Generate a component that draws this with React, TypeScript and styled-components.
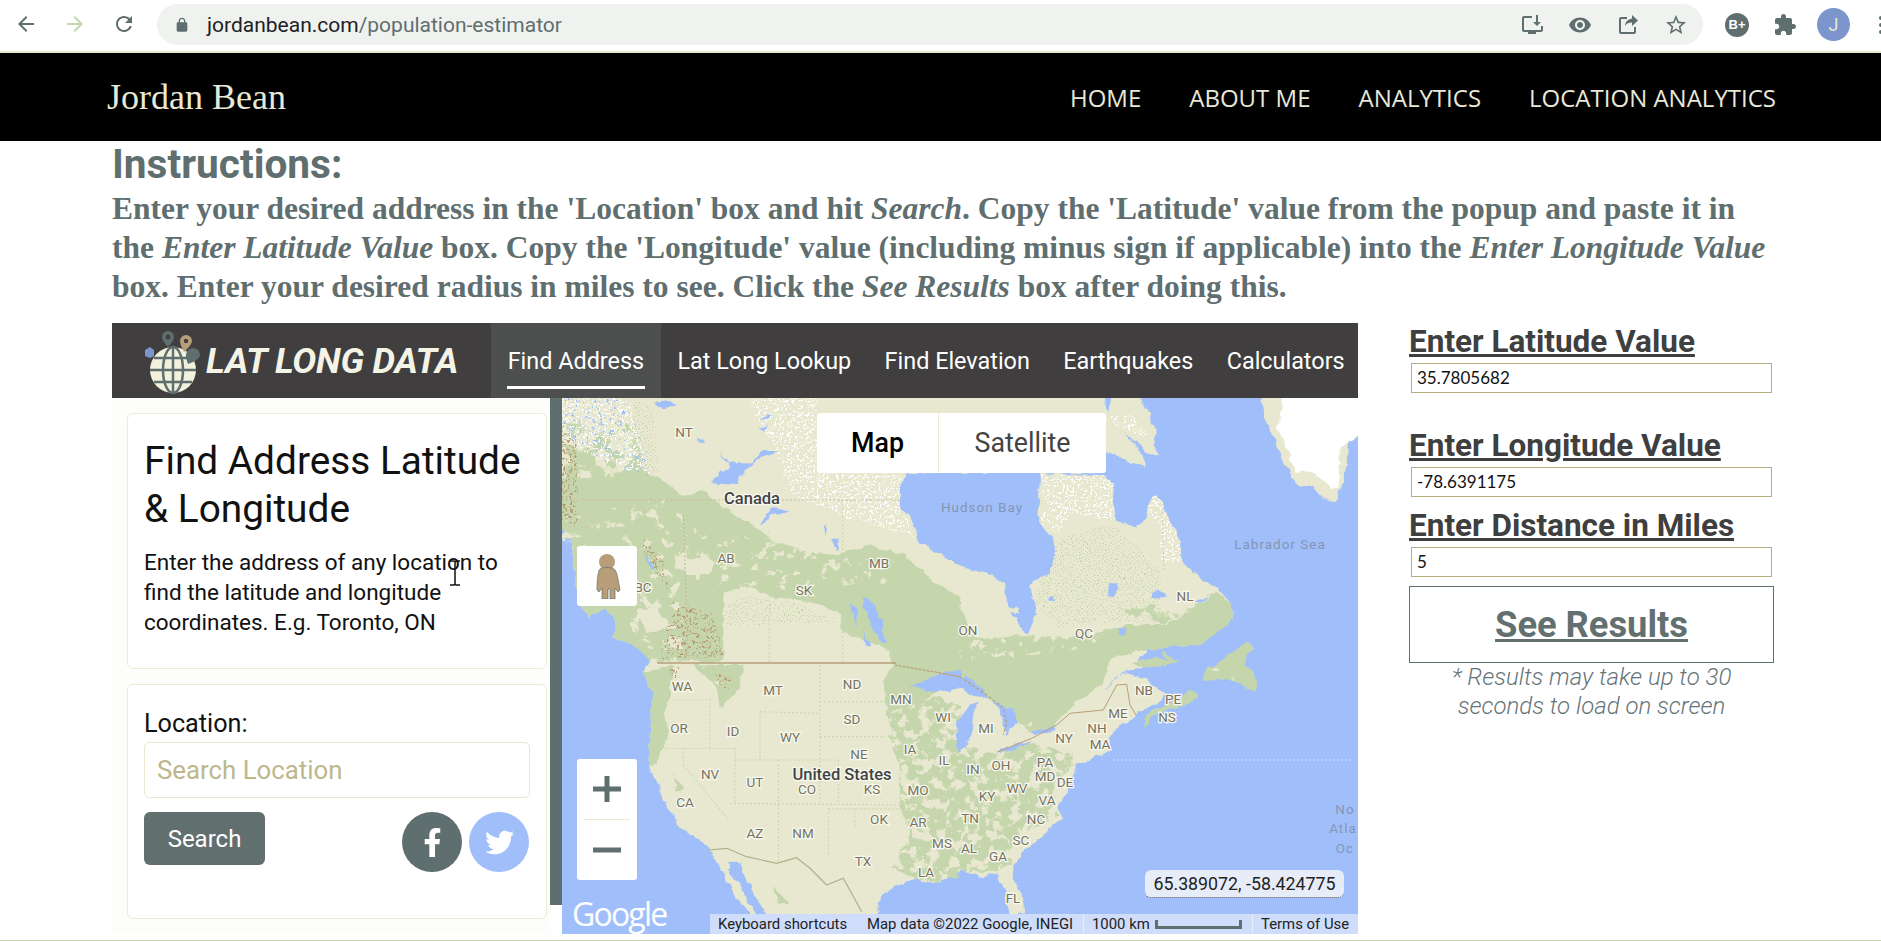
import React from "react";
import styled, { createGlobalStyle } from "styled-components";
import { FaFacebookF, FaTwitter } from "react-icons/fa";

const Global = createGlobalStyle`
  html, body { margin: 0; padding: 0; background: #fff; overflow: hidden; }
  body { font-family: Roboto, "Liberation Sans", sans-serif; width: 1881px; height: 941px; }
  * { box-sizing: border-box; }
`;

const Page = styled.div`
  position: relative;
  width: 1881px;
  height: 941px;
  display: flex;
  flex-direction: column;
  overflow: hidden;
  background: #fff;
  border-bottom: 1px solid #c8d8b0;
`;

/* ---------- browser chrome ---------- */
const Toolbar = styled.div`
  height: 53px;
  flex: none;
  display: flex;
  align-items: flex-start;
  background: #fff;
  border-bottom: 2px solid #e8e8d0;
  padding: 4px 0 0 14px;
`;
const NavIcon = styled.svg<{ $c?: string }>`
  width: 24px;
  height: 24px;
  fill: ${(p) => p.$c || "#5f6e6e"};
  flex: none;
  margin: 8px 25px 0 0;
`;
const UrlBar = styled.div`
  width: 1546px;
  height: 41px;
  margin-left: -4px;
  border-radius: 21px;
  background: #f0f2f0;
  display: flex;
  align-items: center;
  padding: 0 13px 0 17px;
  flex: none;
`;
const LockIcon = styled.svg`
  width: 16px;
  height: 18px;
  fill: #5f6e6e;
  flex: none;
  margin: 0 17px 0 0;
`;
const UrlHost = styled.span`
  font: 400 21px Roboto, sans-serif;
  color: #202124;
`;
const UrlPath = styled.span`
  font: 400 21px Roboto, sans-serif;
  color: #5f6e6e;
`;
const UrlActions = styled.div`
  margin-left: auto;
  display: flex;
  align-items: center;
  gap: 24px;
  padding-right: 2px;
`;
const ActionIcon = styled.svg`
  width: 24px;
  height: 24px;
  fill: #5f6e6e;
  flex: none;
  display: block;
`;
const ChromeRight = styled.div`
  display: flex;
  align-items: center;
  height: 41px;
  margin-left: 22px;
  flex: none;
`;
const Badge = styled.div`
  width: 24px;
  height: 24px;
  border-radius: 50%;
  background: #5f6e6e;
  color: #fff;
  font: 700 13px "Liberation Sans", sans-serif;
  display: flex;
  align-items: center;
  justify-content: center;
  margin-right: 24px;
`;
const Avatar = styled.div`
  width: 33px;
  height: 33px;
  border-radius: 50%;
  background: #7d95cd;
  color: #e8e8d0;
  font: 400 18px Roboto, sans-serif;
  display: flex;
  align-items: center;
  justify-content: center;
  margin-left: 20px;
`;
const Dots = styled.div`
  display: flex;
  flex-direction: column;
  gap: 3px;
  margin-left: 29px;
`;
const Dot = styled.span`
  width: 4px;
  height: 4px;
  border-radius: 50%;
  background: #5f6e6e;
`;

/* ---------- site header ---------- */
const SiteNav = styled.header`
  height: 88px;
  flex: none;
  background: #000;
  display: flex;
  align-items: center;
  justify-content: space-between;
  padding: 0 105px 0 107px;
`;
const Brand = styled.div`
  font: 400 36px "Liberation Serif", serif;
  color: #e8e8d8;
`;
const SiteLinks = styled.nav`
  display: flex;
  gap: 48px;
`;
const SiteLink = styled.a`
  font: 400 24px "Open Sans", sans-serif;
  color: #e8e8d8;
`;

/* ---------- instructions ---------- */
const Content = styled.main`
  padding: 0 0 0 112px;
  flex: 1;
  min-height: 0;
  display: flex;
  flex-direction: column;
`;
const Title = styled.h2`
  margin: 2px 0 0;
  font: 700 40.6px/42px Roboto, sans-serif;
  color: #5f6e6e;
`;
const Instructions = styled.p`
  margin: 4px 0 0;
  width: 1662px;
  font: 700 31.5px/39px "Liberation Serif", serif;
  color: #5f6e6e;
  em { font-style: italic; }
`;
const Row = styled.div`
  display: flex;
  margin-top: 17px;
  align-items: flex-start;
`;

/* ---------- embedded page ---------- */
const Embed = styled.section`
  width: 1246px;
  height: 611px;
  display: flex;
  flex-direction: column;
  flex: none;
`;
const EmbedHeader = styled.div`
  height: 75px;
  background: #403e3f;
  display: flex;
  flex: none;
`;
const Logo = styled.div`
  width: 379px;
  display: flex;
  align-items: center;
  padding-left: 28px;
  gap: 0;
  flex: none;
`;
const LogoGlobe = styled.svg`
  width: 66px;
  height: 66px;
  flex: none;
`;
const LogoText = styled.span`
  font: italic 700 35.8px Roboto, sans-serif;
  color: #f4f4e6;
  white-space: nowrap;
  letter-spacing: -0.2px;
`;
const Tabs = styled.div`
  display: flex;
  flex: 1;
  min-width: 0;
`;
const Tab = styled.a<{ $active?: boolean }>`
  font: 400 23.4px Roboto, sans-serif;
  color: #fff;
  padding: 0 16.7px;
  display: flex;
  flex: none;
  align-items: center;
  height: 75px;
  position: relative;
  white-space: nowrap;
  background: ${(p) => (p.$active ? "#4d4e4e" : "transparent")};
  ${(p) =>
    p.$active &&
    `&::after { content: ""; position: absolute; left: 16px; right: 16px; bottom: 9px; height: 3px; background: #fff; }`}
`;
const EmbedBody = styled.div`
  display: flex;
  flex: 1;
  min-height: 0;
`;
const Sidebar = styled.aside`
  width: 438px;
  flex: none;
  background: #fdfdfa;
  padding: 15px 3px 0 15px;
  display: flex;
  flex-direction: column;
  gap: 15px;
`;
const Card = styled.div<{ $h: number }>`
  height: ${(p) => p.$h}px;
  background: #fff;
  border: 1px solid #ecebd4;
  border-radius: 6px;
  padding: 0 16px;
`;
const CardTitle = styled.h1`
  margin: 23px 0 0;
  font: 400 38.8px/48px Roboto, sans-serif;
  color: #111;
`;
const CardText = styled.p`
  margin: 14px 0 0;
  font: 400 22.5px/30px Roboto, sans-serif;
  color: #111;
  width: 370px;
`;
const FieldLabel = styled.div`
  margin-top: 25px;
  font: 400 25.2px/28px Roboto, sans-serif;
  color: #111;
`;
const LocationInput = styled.div`
  height: 56px;
  margin-top: 4px;
  border: 1px solid #e8e8d0;
  border-radius: 5px;
  padding: 0 12px;
  display: flex;
  align-items: center;
  font: 400 25.8px Roboto, sans-serif;
  color: #bdb78e;
`;
const CardFooter = styled.div`
  margin-top: 14px;
  display: flex;
  align-items: flex-start;
`;
const SearchButton = styled.button`
  width: 121px;
  height: 53px;
  border: 0;
  border-radius: 6px;
  background: #626f6f;
  color: #fff;
  font: 400 24px Roboto, sans-serif;
`;
const SocialWrap = styled.div`
  margin-left: auto;
  margin-right: 1px;
  display: flex;
  gap: 7px;
`;
const Social = styled.a<{ $bg: string }>`
  width: 60px;
  height: 60px;
  border-radius: 50%;
  background: ${(p) => p.$bg};
  color: #fff;
  display: flex;
  align-items: center;
  justify-content: center;
  font-size: 29px;
`;
const Scrollbar = styled.div`
  width: 12px;
  height: 507px;
  background: #5f6e6e;
  flex: none;
`;

/* ---------- map ---------- */
const MapArea = styled.div`
  width: 796px;
  height: 536px;
  position: relative;
  overflow: hidden;
  background: #a0bffa;
  flex: none;
`;
const MapSvg = styled.svg`
  display: block;
  width: 796px;
  height: 536px;
`;
const MapTypeBox = styled.div`
  position: absolute;
  left: 255px;
  top: 15px;
  width: 289px;
  height: 60px;
  background: #fff;
  border-radius: 3px;
  display: flex;
`;
const MapType = styled.div<{ $on?: boolean }>`
  display: flex;
  align-items: center;
  justify-content: center;
  font: ${(p) => (p.$on ? 500 : 400)} 26.8px Roboto, sans-serif;
  color: ${(p) => (p.$on ? "#000" : "#444")};
  width: ${(p) => (p.$on ? 122 : 167)}px;
  border-right: ${(p) => (p.$on ? "1px solid #ecebd4" : "0")};
`;
const Pegman = styled.div`
  position: absolute;
  left: 15px;
  top: 148px;
  width: 60px;
  height: 60px;
  background: #fff;
  border-radius: 3px;
  display: flex;
  align-items: center;
  justify-content: center;
`;
const PegIcon = styled.svg`
  width: 28px;
  height: 46px;
`;
const Zoom = styled.div`
  position: absolute;
  left: 15px;
  top: 361px;
  width: 60px;
  height: 121px;
  background: #fff;
  border-radius: 3px;
  display: flex;
  flex-direction: column;
`;
const ZoomBtn = styled.div`
  flex: 1;
  display: flex;
  align-items: center;
  justify-content: center;
  &:first-child { border-bottom: 1px solid #ecebd4; margin: 0 7px; }
`;
const ZoomGlyph = styled.svg`
  width: 28px;
  height: 28px;
  fill: #5f6e6e;
`;
const GoogleMark = styled.div`
  position: absolute;
  left: 10px;
  bottom: 2px;
  font: 400 32px/36px "Open Sans", sans-serif;
  letter-spacing: -1.8px;
  color: #fff;
`;
const Coordinates = styled.div`
  position: absolute;
  left: 583px;
  top: 472px;
  width: 199px;
  height: 28px;
  border-radius: 6px;
  background: #e6ecf8;
  border-bottom: 1px dotted #444;
  color: #222;
  font: 400 17.8px/27px Roboto, sans-serif;
  text-align: center;
  white-space: nowrap;
`;
const Attribution = styled.div`
  position: absolute;
  left: 148px;
  right: 0;
  bottom: 0;
  height: 20px;
  background: #cfddfb;
  display: flex;
  align-items: center;
  font: 400 14.9px/20px Roboto, sans-serif;
  color: #222;
  white-space: nowrap;
`;
const AttrItem = styled.span<{ $w: number; $div?: boolean }>`
  width: ${(p) => p.$w}px;
  padding-left: 8px;
  height: 20px;
  display: flex;
  align-items: center;
  gap: 5px;
  flex: none;
  border-left: ${(p) => (p.$div ? "1px solid #e8edf8" : "0")};
`;
const ScaleBar = styled.i`
  display: block;
  width: 87px;
  height: 9px;
  border: 3px solid #5f6e6e;
  border-top: 0;
`;
const Cursor = styled.svg`
  position: absolute;
  left: 448px;
  top: 560px;
  width: 14px;
  height: 26px;
`;

/* ---------- side form ---------- */
const Form = styled.aside`
  width: 365px;
  margin-left: 51px;
  margin-top: 1px;
  display: flex;
  flex-direction: column;
`;
const FormLabel = styled.label<{ $mt: number }>`
  margin-top: ${(p) => p.$mt}px;
  font: 700 31.5px/36px Roboto, sans-serif;
  color: #3f3f40;
  text-decoration: underline;
  white-space: nowrap;
`;
const FormInput = styled.div`
  width: 361px;
  height: 30px;
  margin: 3px 0 0 2px;
  border: 1px solid #b5ad7d;
  padding-left: 5px;
  font: 400 17px/28px Lato, sans-serif;
  color: #111;
`;
const ResultsButton = styled.div`
  margin-top: 9px;
  height: 77px;
  width: 365px;
  border: 1px solid #5f6e6e;
  display: flex;
  align-items: center;
  justify-content: center;
  font: 700 36.3px Roboto, sans-serif;
  color: #627070;
  text-decoration: underline;
`;
const Note = styled.p`
  margin: 0;
  padding: 0 30px 0;
  font: italic 300 24px/29px Roboto, sans-serif;
  color: #66757a;
  text-align: center;
`;

/* ---------- map drawing ---------- */
const W = "#a0bffa";
const L = "#e8e8d0";
const G = "#c5d6ad";
const B = "#b89e78";

const z = (ox: number, oy: number, pts: number[]) => {
  const out: string[] = [];
  for (let i = 0; i < pts.length; i += 2) out.push(`${(ox + pts[i] / 3).toFixed(1)},${(oy + pts[i + 1] / 3).toFixed(1)}`);
  return out.join(" ");
};
const z8 = (p: number[]) => z(560, 395, p);
const z9 = (p: number[]) => z(960, 395, p);
const z10 = (p: number[]) => z(560, 665, p);
const z11 = (p: number[]) => z(960, 665, p);

const landMain =
  "540,380 " +
  z9([0, -50, 520, -50, 520, 0]) + " " +
  z9([240, 200, 260, 235, 425, 240, 465, 265, 460, 340, 470, 375, 520, 400, 560, 370, 565, 340, 588, 295, 600, 320, 630, 380, 655, 420, 670, 460, 660, 490, 700, 535, 775, 580, 815, 625, 818, 670, 790, 720, 760, 745, 700, 760, 560, 770, 530, 800]) + " " +
  z11([600, 0, 490, 20, 520, 30, 560, 40, 590, 70, 610, 85, 600, 110, 530, 145, 525, 160, 470, 190, 445, 225, 450, 258, 385, 285, 350, 295, 345, 320, 320, 380, 295, 420, 303, 460, 250, 510, 190, 560, 160, 600, 160, 640, 190, 700, 192, 745, 150, 750, 130, 670, 110, 625, 60, 635, 0, 615]) + " " +
  z10([1160, 640, 1130, 655, 1070, 640, 1000, 665, 960, 700, 950, 750, 940, 830, 700, 830]) + " " +
  z10([600, 820, 570, 745, 530, 700, 500, 640, 450, 560, 430, 530, 360, 490, 310, 400, 265, 300, 270, 200, 275, 90, 270, 60, 250, 20]) + " " +
  z8([270, 800, 240, 760, 200, 745, 160, 730, 170, 680, 140, 640, 85, 670, 50, 600, 40, 480, 30, 440, 0, 380, -60, 380]);

const stateLines = [
  [780, 0, 780, 420], [600, 140, 780, 145], [780, 110, 975, 110], [780, 215, 975, 215], [600, 140, 600, 285],
  [450, 100, 450, 250], [290, 250, 530, 250], [340, 105, 450, 105], [525, 250, 525, 420], [655, 285, 835, 285],
  [835, 285, 835, 420], [525, 285, 655, 285], [510, 415, 1020, 420], [655, 285, 655, 590], [805, 430, 805, 575],
  [885, 430, 885, 490], [975, 110, 1020, 300], [1020, 300, 1020, 430], [805, 432, 1020, 432],
  [370, 250, 370, 300], [370, 300, 510, 470],
];
const canadaLines8 = [[370, 360, 385, 800], [628, 410, 628, 800], [848, 315, 848, 800], [5, 315, 1020, 315], [1000, 480, 1000, 780]];
const labels: [string, number, number][] = [
  ["NT", 684, 432], ["AB", 726, 558], ["MB", 879, 563], ["SK", 804, 590], ["BC", 643, 587],
  ["ON", 968, 630], ["QC", 1084, 633], ["NL", 1185, 596],
  ["WA", 682, 686], ["MT", 773, 690], ["ND", 852, 684], ["MN", 901, 699], ["WI", 943, 717], ["OR", 679, 728],
  ["ID", 733, 731], ["WY", 790, 737], ["SD", 852, 719], ["IA", 910, 749], ["NE", 859, 754], ["IL", 944, 760],
  ["NV", 710, 774], ["UT", 755, 782], ["CO", 807, 789], ["KS", 872, 789], ["MO", 918, 790], ["CA", 685, 802],
  ["AZ", 755, 833], ["NM", 803, 833], ["OK", 879, 819], ["AR", 918, 822], ["MS", 942, 843], ["TX", 863, 861], ["LA", 926, 872],
  ["NB", 1144, 690], ["PE", 1173, 699], ["ME", 1118, 713], ["NS", 1167, 717], ["MI", 986, 728], ["NH", 1097, 728],
  ["NY", 1064, 738], ["MA", 1100, 744], ["IN", 973, 769], ["OH", 1001, 765], ["PA", 1045, 762], ["MD", 1045, 776],
  ["DE", 1065, 782], ["KY", 987, 796], ["WV", 1017, 788], ["VA", 1047, 800], ["TN", 970, 818], ["NC", 1036, 819],
  ["SC", 1021, 840], ["AL", 969, 848], ["GA", 998, 856], ["FL", 1013, 898],
];
const seaLabels: [string, number, number][] = [
  ["Hudson Bay", 982, 507], ["Labrador Sea", 1280, 544], ["No", 1345, 809], ["Atla", 1343, 828], ["Oc", 1345, 848],
];

const MapLabel = styled.text`
  font: 400 13.5px Roboto, sans-serif;
  fill: #75735e;
  stroke: #f8f8ee;
  stroke-width: 2.5px;
  paint-order: stroke;
  text-anchor: middle;
  dominant-baseline: central;
`;
const CountryLabel = styled(MapLabel)`
  font: 500 16.5px Roboto, sans-serif;
  fill: #3f4446;
`;
const SeaLabel = styled.text`
  font: 400 13.5px Roboto, sans-serif;
  fill: #8495b4;
  letter-spacing: 1px;
  text-anchor: middle;
  dominant-baseline: central;
`;

const Mottle = ({ id, color, freq, t, seed }: { id: string; color: [number, number, number]; freq: number; t: number; seed: number }) => (
  <filter id={id} filterUnits="userSpaceOnUse" x="540" y="380" width="840" height="570" colorInterpolationFilters="sRGB">
    <feTurbulence type="fractalNoise" baseFrequency={freq} numOctaves={4} seed={seed} result="n" />
    <feColorMatrix
      in="n"
      result="c"
      values={`0 0 0 0 ${color[0] / 255} 0 0 0 0 ${color[1] / 255} 0 0 0 0 ${color[2] / 255} 14 0 0 0 ${-14 * t}`}
    />
    <feComposite in="c" in2="SourceAlpha" operator="in" />
  </filter>
);

const TheMap = () => (
  <MapSvg viewBox="562 398 796 536">
    <defs>
      <pattern id="greenDots" width="4" height="4" patternUnits="userSpaceOnUse">
        <rect x="1" y="1" width="1" height="1" fill={G} />
        <rect x="3" y="3" width="1" height="1" fill={G} />
      </pattern>
      <filter id="rough" filterUnits="userSpaceOnUse" x="540" y="380" width="840" height="570" colorInterpolationFilters="sRGB">
        <feTurbulence type="fractalNoise" baseFrequency=".09" numOctaves={3} seed={7} result="n" />
        <feDisplacementMap in="SourceGraphic" in2="n" scale="7" xChannelSelector="R" yChannelSelector="G" />
      </filter>
      <Mottle id="mGreen" color={[197, 214, 173]} freq={0.06} t={0.47} seed={3} />
      <Mottle id="mGreenDense" color={[197, 214, 173]} freq={0.1} t={0.41} seed={9} />
      <Mottle id="mBeige" color={[232, 232, 208]} freq={0.1} t={0.61} seed={5} />
      <Mottle id="mBrown" color={[184, 158, 120]} freq={0.4} t={0.58} seed={11} />
      <Mottle id="mWhite" color={[255, 255, 255]} freq={0.5} t={0.54} seed={2} />
      <Mottle id="mBlue" color={[160, 191, 250]} freq={0.3} t={0.64} seed={13} />
    </defs>
    <rect x="540" y="380" width="840" height="570" fill={W} />
    <g filter="url(#rough)">
      {/* continent */}
      <polygon points={landMain} fill={L} />
      {/* boreal green */}
      <polygon
        points={
          z8([-30, 250, 60, 250, 150, 250, 230, 190, 250, 230, 280, 240, 360, 300, 440, 290, 490, 340, 580, 390, 640, 440, 740, 470, 830, 480, 920, 450, 1040, 480, 1120, 560, 1200, 600]) +
          " " +
          z9([0, 640, 50, 730, 190, 720, 300, 730, 430, 710, 500, 690, 620, 690, 700, 640, 770, 590, 815, 625, 818, 670, 790, 720, 730, 750, 560, 765, 450, 790]) +
          " " +
          z11([420, 60, 380, 95, 330, 135, 280, 180, 215, 205, 160, 160, 130, 130, 60, 80, 0, 40]) +
          " " +
          z10([1130, 80, 1040, 130, 980, 140, 970, 40, 1000, 0]) +
          " " +
          z8([1000, 800, 980, 760, 850, 710, 840, 660, 770, 620, 650, 610, 560, 570, 490, 600, 490, 800, 270, 800, 240, 760, 200, 745, 160, 730, 170, 680, 140, 640, 85, 670, 50, 600, 40, 480, 30, 440, 0, 380, -30, 380])
        }
        fill={G}
      />
      <polygon points={z8([220, 20, 280, 30, 300, 240, 240, 240, 210, 130])} fill="url(#greenDots)" />
      <polygon points={z8([-30, 80, 200, 80, 280, 250, -30, 260])} filter="url(#mGreen)" />
      <polygon points={z8([340, 480, 400, 490, 470, 500, 450, 540, 380, 540, 350, 520])} fill={L} />
      <polygon points={z8([230, 650, 290, 630, 320, 700, 260, 715])} fill={L} />
      <polygon points={z8([330, 720, 370, 730, 370, 760, 330, 760])} fill={L} />
      <polygon points={z8([380, 380, 620, 440, 1000, 500, 1000, 560, 490, 600, 360, 520])} filter="url(#mBeige)" />
      <polygon points={z8([-30, 380, 370, 300, 370, 800, 270, 800, 40, 480])} filter="url(#mBeige)" />
      <polygon points={z9([0, 700, 430, 700, 430, 760, 0, 800])} filter="url(#mBeige)" />
      {/* prairie + Quebec fine stipple */}
      <polygon points={z8([490, 640, 560, 600, 700, 620, 830, 680, 500, 690])} fill="url(#greenDots)" />
      <polygon points={z9([290, 440, 450, 380, 600, 520, 600, 680, 430, 680, 300, 700, 220, 620])} fill="url(#greenDots)" />
      <polygon points={z9([470, 640, 610, 690, 700, 640, 640, 620, 540, 640])} filter="url(#mGreen)" />
      {/* north: snow speckle */}
      <polygon points={z9([240, 240, 425, 240, 465, 265, 460, 340, 470, 375, 400, 370, 340, 350, 290, 420, 235, 380, 260, 320])} filter="url(#mWhite)" />
      <polygon points={z9([565, 340, 588, 295, 630, 380, 670, 460, 660, 510, 600, 500, 600, 400])} filter="url(#mWhite)" />
      <polygon points={z8([560, 0, 770, 0, 770, 230, 1030, 240, 1020, 340, 1060, 420, 900, 380, 700, 300, 640, 160])} filter="url(#mWhite)" />
      <polygon points={z8([-30, 0, 200, 0, 270, 240, 120, 200, -30, 100])} filter="url(#mWhite)" />
      <polygon points={z8([-30, 0, 200, 0, 270, 240, 120, 200, -30, 100])} filter="url(#mBlue)" />
      {/* US west forests */}
      <polygon points={z10([250, 20, 340, 0, 330, 100, 310, 150, 330, 200, 290, 300, 265, 300, 270, 200, 275, 90])} fill={G} />
      <polygon points={z10([400, 0, 550, 0, 540, 70, 480, 125, 470, 70])} fill={G} />
      <polygon points={z10([425, 0, 520, 0, 510, 50, 470, 60])} filter="url(#mBeige)" />
      <polygon points={z10([630, 660, 690, 720, 660, 720])} fill={G} />
      <polygon points={z10([335, 320, 370, 375, 350, 380])} fill={G} />
      {/* US east forests */}
      <polygon
        points={
          z10([975, 140, 1050, 100, 1130, 90, 1200, 130, 1200, 640, 1160, 640, 1130, 655, 1070, 640, 1000, 610, 1050, 500, 1020, 430, 1020, 300, 985, 210]) +
          " " +
          z11([0, 240, 120, 270, 200, 230, 280, 250, 345, 270, 335, 310, 290, 340, 280, 390, 295, 450, 200, 500, 150, 555, 150, 600, 100, 620, 0, 620])
        }
        filter="url(#mGreenDense)"
      />
      <polygon points={z11([340, 110, 400, 90, 440, 140, 330, 150])} fill={L} />
      <polygon points={z11([145, 165, 215, 160, 210, 215, 130, 230])} filter="url(#mBeige)" />
      {/* brown rockies */}
      <polygon points={z8([340, 620, 460, 660, 490, 790, 300, 790])} filter="url(#mBrown)" />
      <polygon points={z8([-30, 90, 50, 130, 50, 400, -30, 360])} filter="url(#mBrown)" />
      <polygon points={z8([240, 420, 300, 480, 330, 590, 260, 500])} filter="url(#mBrown)" />
      <polygon points={z10([330, 0, 360, 0, 360, 40, 330, 40])} filter="url(#mBrown)" />
      <polygon points={z10([470, 30, 520, 30, 510, 70, 480, 70])} filter="url(#mBrown)" />
      {/* Gulf of St Lawrence + Hudson / James Bay */}
      <polygon
        points="1103,690 1117,677 1143,667 1147,650 1200,645 1223,628 1237,625 1260,630 1260,700 1197,698 1190,690 1177,700 1163,693 1157,688 1147,678 1133,675 1123,672 1107,688"
        fill={W}
      />
      <polygon points={z9([-40, 230, 240, 230, 235, 380, 280, 430, 285, 490, 270, 530, 210, 570, 230, 660, 200, 715, 170, 680, 140, 630, 135, 560, 90, 540, 0, 510]) + " " + z8([1100, 455, 1075, 440, 1060, 380, 1020, 340, 1020, 280, 1040, 235])} fill={W} />
      {/* Baffin */}
      <polygon points={z9([160, 60, 250, -40, 520, -40, 590, 110, 580, 150, 597, 185, 560, 170, 490, 110, 540, 170, 555, 215, 500, 200, 435, 165, 420, 232, 250, 232])} fill={L} />
      <polygon points={z9([445, 60, 520, 60, 570, 130, 530, 120, 470, 90])} filter="url(#mWhite)" />
      <polygon points={z9([430, -40, 440, 55, 470, -40])} fill={W} />
      <polygon points={z9([140, 640, 175, 635, 178, 655, 150, 650])} fill={L} />
      {/* Newfoundland, Nova Scotia, islands */}
      <polygon points={z11([730, 45, 740, 10, 770, 0, 800, -25, 860, -70, 880, -50, 850, 0, 880, 20, 892, 60, 885, 82, 845, 60, 800, 40])} fill={G} />
      <polygon points={z11([750, 10, 820, 10, 820, 45, 740, 45])} filter="url(#mBeige)" />
      <polygon points={z11([550, 190, 570, 155, 610, 135, 665, 125, 710, 100, 690, 75, 650, 105, 590, 130, 560, 150])} fill={G} />
      <polygon points={z9([520, 800, 590, 790, 660, 800, 640, 802, 600, 815, 530, 815])} fill={G} />
      <polygon points={z9([600, 770, 660, 795, 640, 800, 610, 785])} fill={G} />
      {/* greenland */}
      <polygon points={z9([900, -40, 1240, -40, 1240, 90, 1165, 110, 1160, 220, 1130, 320, 1090, 310, 1060, 270, 1015, 275, 980, 215, 930, 110, 910, 60])} fill={L} />
      <polygon points={z9([965, -40, 1240, -40, 1240, 90, 1140, 160, 1135, 280, 1110, 280, 1060, 230, 1010, 230, 985, 170, 950, 100, 965, 50])} fill="#fff" />
      {/* lakes */}
      <g fill={W}>
        <polygon points={z8([470, 165, 510, 205, 570, 205, 610, 165, 650, 165, 610, 185, 565, 215, 530, 270, 455, 265, 480, 230, 510, 215])} />
        <polygon points={z8([600, 385, 640, 340, 690, 350, 640, 360, 610, 385])} />
        <polygon points={z8([905, 610, 930, 610, 965, 680, 980, 745, 960, 740, 930, 680])} />
        <polygon points={z8([865, 625, 895, 640, 890, 695, 875, 650])} />
        <polygon points={z8([815, 430, 840, 425, 830, 470])} />
        <polygon points={z8([795, 395, 805, 395, 800, 425])} />
        <polygon points={z8([910, 710, 930, 750, 920, 760])} />
        <polygon points={z8([410, 125, 430, 135, 435, 150, 415, 140])} />
        <polygon points={z8([285, 20, 330, 15, 360, 30, 310, 40])} />
        <polygon points={z8([250, 480, 280, 520, 270, 525])} />
        <polygon points={z8([590, 100, 625, 90, 610, 110])} />
        <polygon points={z8([600, 65, 635, 60, 620, 75])} />
        <polygon points={z9([445, 565, 475, 565, 470, 600, 445, 605])} />
        <polygon points={z9([570, 600, 600, 580, 620, 605, 575, 612])} />
        <polygon points={z9([705, 620, 750, 598, 720, 625])} />
        <polygon points={z9([260, 610, 285, 605, 280, 620, 262, 620])} />
        <polygon points={z9([475, 700, 500, 700, 495, 725, 475, 720])} />
        {/* great lakes */}
        <polygon points={z10([1040, 60, 1090, 55, 1130, 25, 1200, 15, 1200, 70, 1130, 80])} />
        <polygon points={z11([0, 40, 20, 30, 70, 80, 90, 100, 70, 100, 40, 85, 0, 70])} />
        <polygon points={z11([-8, 170, 30, 120, 60, 115, 40, 140, 35, 200, 20, 240, 0, 262, -10, 230])} />
        <polygon points={z11([90, 105, 160, 135, 172, 165, 150, 190, 140, 212, 128, 170, 118, 130])} />
        <polygon points={z11([110, 260, 150, 245, 212, 225, 170, 255, 120, 268])} />
        <polygon points={z11([215, 200, 280, 180, 287, 195, 222, 212])} />
        <polygon points={z10([505, 590, 540, 590, 560, 650, 590, 700, 625, 760, 595, 760, 540, 660, 510, 630])} />
      </g>
    </g>
    {/* borders */}
    <g fill="none" stroke={G} strokeWidth="1" strokeDasharray="2 2">
      {stateLines.map((s, i) => (
        <line key={i} x1={560 + s[0] / 3} y1={665 + s[1] / 3} x2={560 + s[2] / 3} y2={665 + s[3] / 3} />
      ))}
      {canadaLines8.map((s, i) => (
        <line key={i} x1={560 + s[0] / 3} y1={395 + s[1] / 3} x2={560 + s[2] / 3} y2={395 + s[3] / 3} stroke={i === 0 || i === 3 ? "#c8b89a" : G} />
      ))}
      <line x1="1162" y1="512" x2="1164" y2="570" />
    </g>
    <g fill="none" strokeWidth="1.2">
      <line x1="657" y1="663" x2="896" y2="663" stroke={B} strokeWidth="1.5" />
      <polyline points={z10([1005, 0, 1060, 10, 1120, 20, 1200, 35])} stroke={B} strokeDasharray="3 1" />
      <polyline points={z11([0, 35, 80, 90, 130, 130, 140, 175, 130, 210])} stroke={B} strokeDasharray="3 2" />
      <polyline points={z11([110, 262, 215, 220, 290, 180, 330, 145, 430, 135, 470, 60, 500, 58, 510, 120, 528, 150])} stroke={B} strokeWidth="1" />
      <polyline points={z10([445, 555, 500, 550, 560, 575, 650, 595, 710, 578, 750, 610, 800, 660, 850, 640, 905, 740])} stroke="#a9b48a" />
    </g>
    <line x1="1113" y1="760" x2="1352" y2="760" stroke="#fff" strokeWidth="1" strokeDasharray="1 3" />
    {labels.map(([t, x, y]) => (
      <MapLabel key={t} x={x} y={y}>{t}</MapLabel>
    ))}
    <CountryLabel x={752} y={498}>Canada</CountryLabel>
    <CountryLabel x={842} y={774}>United States</CountryLabel>
    {seaLabels.map(([t, x, y]) => (
      <SeaLabel key={t} x={x} y={y}>{t}</SeaLabel>
    ))}
  </MapSvg>
);

const Icon = {
  back: "M20 11H7.83l5.59-5.59L12 4l-8 8 8 8 1.41-1.41L7.83 13H20v-2z",
  fwd: "M12 4l-1.41 1.41L16.17 11H4v2h12.17l-5.58 5.59L12 20l8-8z",
  reload: "M17.65 6.35C16.2 4.9 14.21 4 12 4c-4.42 0-7.99 3.58-7.99 8s3.57 8 7.99 8c3.73 0 6.84-2.55 7.73-6h-2.08c-.82 2.33-3.04 4-5.65 4-3.31 0-6-2.69-6-6s2.69-6 6-6c1.66 0 3.14.69 4.22 1.78L13 11h7V4l-2.35 2.35z",
  lock: "M18 8h-1V6c0-2.76-2.24-5-5-5S7 3.24 7 6v2H6c-1.1 0-2 .9-2 2v10c0 1.1.9 2 2 2h12c1.1 0 2-.9 2-2V10c0-1.1-.9-2-2-2zM9 6c0-1.66 1.34-3 3-3s3 1.34 3 3v2H9V6z",
  eye: "M12 4.5C7 4.5 2.73 7.61 1 12c1.73 4.39 6 7.5 11 7.5s9.27-3.11 11-7.5c-1.73-4.39-6-7.5-11-7.5zM12 17c-2.76 0-5-2.24-5-5s2.24-5 5-5 5 2.24 5 5-2.24 5-5 5zm0-8c-1.66 0-3 1.34-3 3s1.34 3 3 3 3-1.34 3-3-1.34-3-3-3z",
  star: "M22 9.24l-7.19-.62L12 2 9.19 8.63 2 9.24l5.46 4.73L5.82 21 12 17.27 18.18 21l-1.63-7.03L22 9.24zM12 15.4l-3.76 2.27 1-4.28-3.32-2.88 4.38-.38L12 6.1l1.71 4.04 4.38.38-3.32 2.88 1 4.28L12 15.4z",
  puzzle: "M20.5 11H19V7c0-1.1-.9-2-2-2h-4V3.5C13 2.12 11.88 1 10.5 1S8 2.12 8 3.5V5H4c-1.1 0-1.99.9-1.99 2v3.8H3.5c1.49 0 2.7 1.21 2.7 2.7s-1.21 2.7-2.7 2.7H2V20c0 1.1.9 2 2 2h3.8v-1.5c0-1.49 1.21-2.7 2.7-2.7 1.49 0 2.7 1.21 2.7 2.7V22H17c1.1 0 2-.9 2-2v-4h1.5c1.38 0 2.5-1.12 2.5-2.5S21.88 11 20.5 11z",
  install: "M4 3h8v2H4v12h17v-4h2v4c0 1.100-.9 2-2 2h-5v2H8v-2H4c-1.100 0-2-.9-2-2V5c0-1.100.9-2 2-2zm12-1h2v7h3l-4 4-4-4h3V2z",
  share: "M5 4h6v2H5v13h13v-5h2v5c0 1.100-.9 2-2 2H5c-1.100 0-2-.9-2-2V6c0-1.100.9-2 2-2zm11-2l6 5.500-6 5.500V9.600c-3.200 0-5.400 1-7 3.400.4-4 2.600-6.600 7-7.400V2z",
};

export default function App() {
  return (
    <Page>
      <Global />
      <Toolbar>
        <NavIcon viewBox="0 0 24 24"><path d={Icon.back} /></NavIcon>
        <NavIcon viewBox="0 0 24 24" $c="#c5d6ad"><path d={Icon.fwd} /></NavIcon>
        <NavIcon viewBox="0 0 24 24"><path d={Icon.reload} /></NavIcon>
        <UrlBar>
          <LockIcon viewBox="0 0 24 24"><path d={Icon.lock} /></LockIcon>
          <UrlHost>jordanbean.com</UrlHost>
          <UrlPath>/population-estimator</UrlPath>
          <UrlActions>
            <ActionIcon viewBox="0 0 24 24"><path d={Icon.install} /></ActionIcon>
            <ActionIcon viewBox="0 0 24 24"><path d={Icon.eye} /></ActionIcon>
            <ActionIcon viewBox="0 0 24 24"><path d={Icon.share} /></ActionIcon>
            <ActionIcon viewBox="0 0 24 24"><path d={Icon.star} /></ActionIcon>
          </UrlActions>
        </UrlBar>
        <ChromeRight>
          <Badge>B+</Badge>
          <ActionIcon viewBox="0 0 24 24"><path d={Icon.puzzle} /></ActionIcon>
          <Avatar>J</Avatar>
          <Dots><Dot /><Dot /><Dot /></Dots>
        </ChromeRight>
      </Toolbar>

      <SiteNav>
        <Brand>Jordan Bean</Brand>
        <SiteLinks>
          <SiteLink>HOME</SiteLink>
          <SiteLink>ABOUT ME</SiteLink>
          <SiteLink>ANALYTICS</SiteLink>
          <SiteLink>LOCATION ANALYTICS</SiteLink>
        </SiteLinks>
      </SiteNav>

      <Content>
        <Title>Instructions:</Title>
        <Instructions>
          Enter your desired address in the 'Location' box and hit <em>Search</em>. Copy the 'Latitude' value from the popup and paste it in the <em>Enter Latitude Value</em> box. Copy the 'Longitude' value (including minus sign if applicable) into the <em>Enter Longitude Value</em> box. Enter your desired radius in miles to see. Click the <em>See Results</em> box after doing this.
        </Instructions>
        <Row>
          <Embed>
            <EmbedHeader>
              <Logo>
                <LogoGlobe viewBox="0 0 66 66">
                  <circle cx="33" cy="42" r="23" fill="#f1f1dc" />
                  <g fill="none" stroke="#5f6e6e" strokeWidth="2.5">
                    <ellipse cx="33" cy="42" rx="10" ry="23" />
                    <line x1="33" y1="19" x2="33" y2="65" />
                    <line x1="10" y1="42" x2="56" y2="42" />
                    <line x1="14" y1="30" x2="52" y2="30" />
                    <line x1="14" y1="54" x2="52" y2="54" />
                  </g>
                  <path d="M28 3a6 6 0 0 1 6 6c0 4-6 10-6 10s-6-6-6-10a6 6 0 0 1 6-6z" fill="#5f6e6e" />
                  <circle cx="28" cy="9" r="2.4" fill="#403e3f" />
                  <path d="M46 7a6 6 0 0 1 6 6c0 4-8 11-8 11s-4-7-4-11a6 6 0 0 1 6-6z" fill="#b89e78" />
                  <circle cx="46" cy="13" r="2.2" fill="#403e3f" />
                  <path d="M53 20a7 7 0 0 1 7 7c0 5-12 9-12 9s-2-5-2-9a7 7 0 0 1 7-7z" fill="#5f6e6e" />
                  <path d="M5 22l5-3 4 3v6l-4 2-5-2z" fill="#7d95cd" />
                </LogoGlobe>
                <LogoText>LAT LONG DATA</LogoText>
              </Logo>
              <Tabs>
                <Tab $active>Find Address</Tab>
                <Tab>Lat Long Lookup</Tab>
                <Tab>Find Elevation</Tab>
                <Tab>Earthquakes</Tab>
                <Tab>Calculators</Tab>
              </Tabs>
            </EmbedHeader>
            <EmbedBody>
              <Sidebar>
                <Card $h={256}>
                  <CardTitle>Find Address Latitude &amp; Longitude</CardTitle>
                  <CardText>Enter the address of any location to find the latitude and longitude coordinates. E.g. Toronto, ON</CardText>
                </Card>
                <Card $h={235}>
                  <FieldLabel>Location:</FieldLabel>
                  <LocationInput>Search Location</LocationInput>
                  <CardFooter>
                    <SearchButton>Search</SearchButton>
                    <SocialWrap>
                      <Social $bg="#5f6e6e"><FaFacebookF /></Social>
                      <Social $bg="#a0bffa"><FaTwitter /></Social>
                    </SocialWrap>
                  </CardFooter>
                </Card>
              </Sidebar>
              <Scrollbar />
              <MapArea>
                <TheMap />
                <MapTypeBox>
                  <MapType $on>Map</MapType>
                  <MapType>Satellite</MapType>
                </MapTypeBox>
                <Pegman>
                  <PegIcon viewBox="0 0 28 46">
                    <circle cx="14" cy="9" r="8" fill="#b89e78" />
                    <path d="M7 16c4-2 10-2 14 0 3 2 4 10 6 21l-2 2-3-4v11h-5V36h-2v10H9V35l-3 4-2-2C4 27 5 18 7 16z" fill="#b89e78" stroke="#5f6e6e" strokeWidth=".7" />
                  </PegIcon>
                </Pegman>
                <Zoom>
                  <ZoomBtn>
                    <ZoomGlyph viewBox="0 0 28 28"><path d="M11.500 1h5v10.500H28v5H16.500V27h-5V16.500H0v-5h11.500z" /></ZoomGlyph>
                  </ZoomBtn>
                  <ZoomBtn>
                    <ZoomGlyph viewBox="0 0 28 28"><rect x="0" y="11.500" width="28" height="5" /></ZoomGlyph>
                  </ZoomBtn>
                </Zoom>
                <GoogleMark>Google</GoogleMark>
                <Coordinates>65.389072, -58.424775</Coordinates>
                <Attribution>
                  <AttrItem $w={149}>Keyboard shortcuts</AttrItem>
                  <AttrItem $w={224}>Map data ©2022 Google, INEGI</AttrItem>
                  <AttrItem $w={169} $div>1000 km<ScaleBar /></AttrItem>
                  <AttrItem $w={106} $div>Terms of Use</AttrItem>
                </Attribution>
              </MapArea>
            </EmbedBody>
          </Embed>
          <Form>
            <FormLabel $mt={0}>Enter Latitude Value</FormLabel>
            <FormInput>35.7805682</FormInput>
            <FormLabel $mt={35}>Enter Longitude Value</FormLabel>
            <FormInput>-78.6391175</FormInput>
            <FormLabel $mt={11}>Enter Distance in Miles</FormLabel>
            <FormInput>5</FormInput>
            <ResultsButton>See Results</ResultsButton>
            <Note>* Results may take up to 30 seconds to load on screen</Note>
          </Form>
        </Row>
      </Content>
      <Cursor viewBox="0 0 14 26">
        <path d="M2 1h4l1 1 1-1h4M7 2v22M2 25h4l1-1 1 1h4" fill="none" stroke="#111" strokeWidth="1.500" />
      </Cursor>
    </Page>
  );
}
